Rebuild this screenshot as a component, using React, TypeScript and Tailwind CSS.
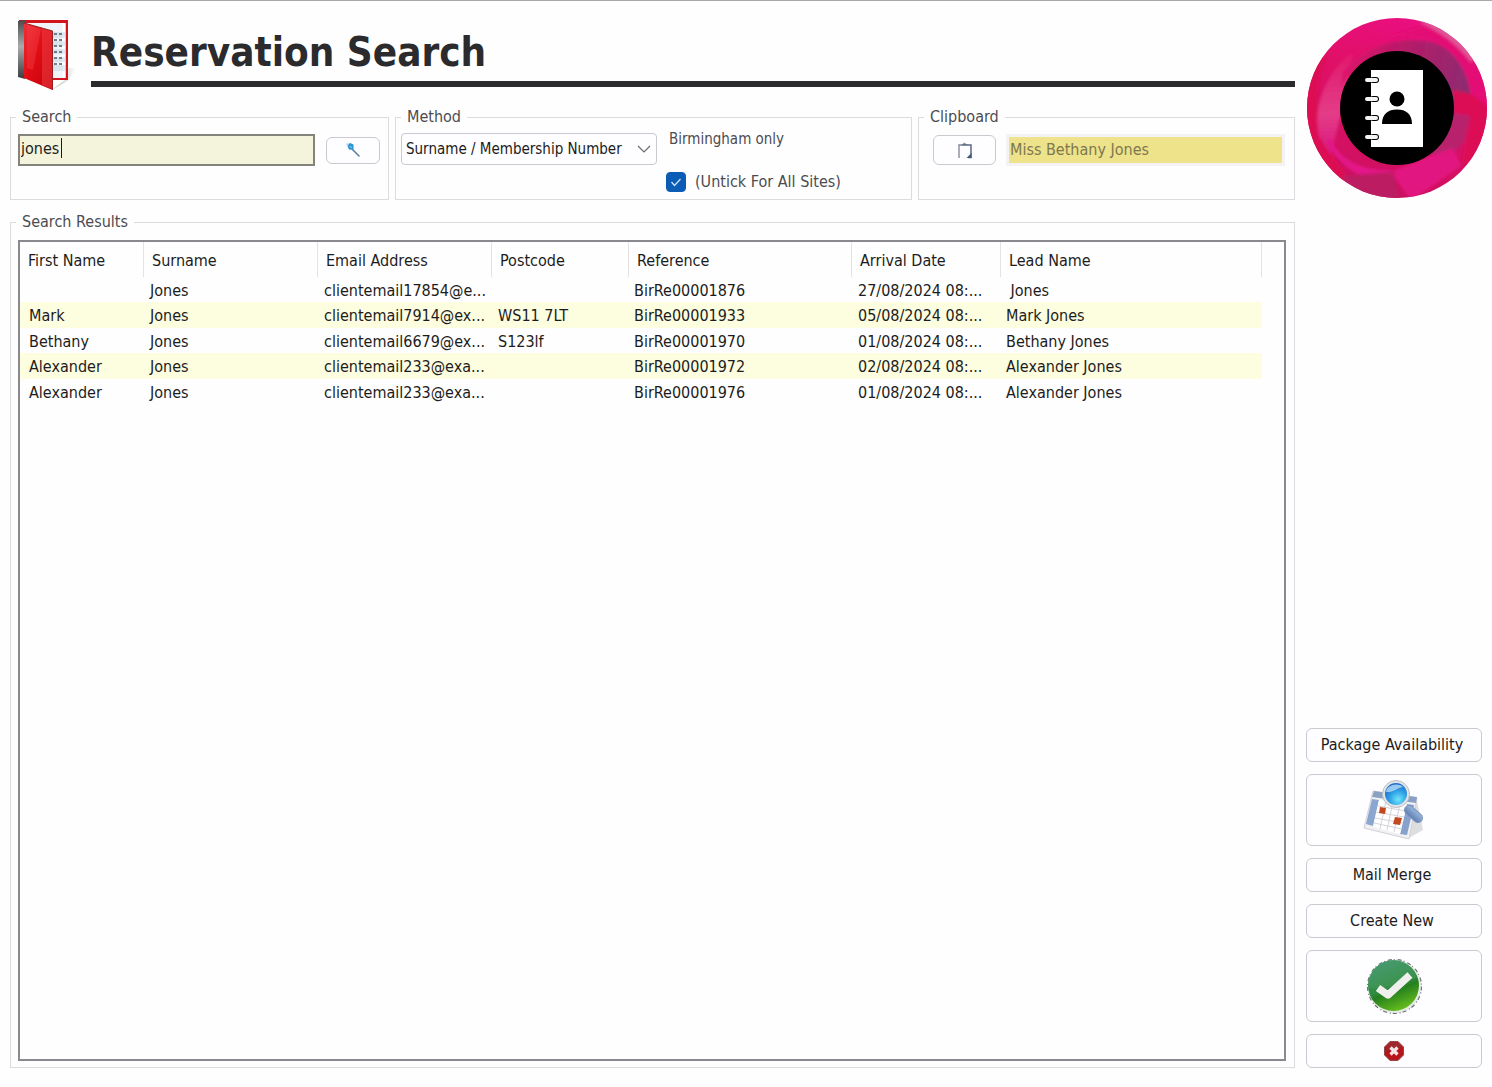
import React, { useState } from 'react'

type Reservation = {
  firstName: string
  surname: string
  email: string
  postcode: string
  reference: string
  arrival: string
  leadName: string
}

const RESERVATIONS: Reservation[] = [
  { firstName: '', surname: 'Jones', email: 'clientemail17854@e...', postcode: '', reference: 'BirRe00001876', arrival: '27/08/2024 08:...', leadName: '\u00a0Jones' },
  { firstName: 'Mark', surname: 'Jones', email: 'clientemail7914@ex...', postcode: 'WS11 7LT', reference: 'BirRe00001933', arrival: '05/08/2024 08:...', leadName: 'Mark Jones' },
  { firstName: 'Bethany', surname: 'Jones', email: 'clientemail6679@ex...', postcode: 'S123lf', reference: 'BirRe00001970', arrival: '01/08/2024 08:...', leadName: 'Bethany Jones' },
  { firstName: 'Alexander', surname: 'Jones', email: 'clientemail233@exa...', postcode: '', reference: 'BirRe00001972', arrival: '02/08/2024 08:...', leadName: 'Alexander Jones' },
  { firstName: 'Alexander', surname: 'Jones', email: 'clientemail233@exa...', postcode: '', reference: 'BirRe00001976', arrival: '01/08/2024 08:...', leadName: 'Alexander Jones' },
]

const COLUMNS = [
  { label: 'First Name', width: 'w-[124px]' },
  { label: 'Surname', width: 'w-[174px]' },
  { label: 'Email Address', width: 'w-[174px]' },
  { label: 'Postcode', width: 'w-[137px]' },
  { label: 'Reference', width: 'w-[223px]' },
  { label: 'Arrival Date', width: 'w-[149px]' },
  { label: 'Lead Name', width: 'w-[261px]' },
]

function BookIcon() {
  return (
    <svg viewBox="0 0 60 74" className="w-[60px] h-[74px] shrink-0" aria-hidden="true">
      <defs>
        <linearGradient id="cover" x1="0" y1="0" x2="1" y2="1">
          <stop offset="0" stopColor="#ee3038" />
          <stop offset="0.45" stopColor="#e00c14" />
          <stop offset="1" stopColor="#c40008" />
        </linearGradient>
        <linearGradient id="spine" x1="0" y1="0" x2="0" y2="1">
          <stop offset="0" stopColor="#4a4a4c" />
          <stop offset="0.45" stopColor="#a9abac" />
          <stop offset="1" stopColor="#3a3a3c" />
        </linearGradient>
        <linearGradient id="bookShadow" x1="0" y1="0" x2="1" y2="0">
          <stop offset="0" stopColor="#8a8a8a" />
          <stop offset="1" stopColor="#ffffff" />
        </linearGradient>
      </defs>
      <path d="M36 72 L50 61 L53 50 L60 50 L53 62 Z" fill="url(#bookShadow)" opacity="0.6" />
      <path d="M3 2 H52 V62 H35 L3 58 Z" fill="#d3141c" />
      <path d="M9 5 H49.500 V60 H36 L9 58 Z" fill="#eef4f7" />
      <path d="M46.500 5 H49.500 V60 H46.500 Z" fill="#ffffff" />
      <path d="M37 14h12v6H37zM37 23h12v5H37zM37 31h12v5H37zM37 39h12v5H37zM37 47h12v6H37z" fill="#bfd3de" opacity="0.45" />
      <path d="M38 16h3M43 16h3M38 22h3M43 22h3M38 28h3M43 28h3M38 34h3M43 34h3M38 40h3M43 40h3M38 46h3M43 46h3" stroke="#4e5a66" strokeWidth="1.400" />
      <path d="M2 3 L9 2 V61 L2 59 Z" fill="url(#spine)" />
      <path d="M8 5 L36.500 13 V72 L8 60 Z" fill="url(#cover)" />
      <path d="M26 10 L36 13 V71 L26 67 Z" fill="#ef4a50" opacity="0.45" />
      <path d="M11 7 L25 11 L17 52 L11 50 Z" fill="#ff5a60" opacity="0.25" />
      <path d="M8 5 L36.500 13 V72" fill="none" stroke="#9c1c20" strokeWidth="1" />
    </svg>
  )
}

function ContactsLogo() {
  return (
    <svg viewBox="0 0 180 180" className="w-[180px] h-[180px]" role="img" aria-label="Contacts">
      <defs>
        <linearGradient id="ring" x1="0.6" y1="0" x2="0.3" y2="1">
          <stop offset="0" stopColor="#ea0f80" />
          <stop offset="0.35" stopColor="#e01066" />
          <stop offset="1" stopColor="#cc1060" />
        </linearGradient>
        <linearGradient id="swirl" x1="0" y1="0.2" x2="1" y2="0.3">
          <stop offset="0" stopColor="#e0106c" />
          <stop offset="0.45" stopColor="#b81a68" />
          <stop offset="1" stopColor="#8e2b70" />
        </linearGradient>
        <linearGradient id="crescent" x1="0" y1="0" x2="0" y2="1">
          <stop offset="0" stopColor="#e0186c" />
          <stop offset="0.6" stopColor="#e43c88" />
          <stop offset="1" stopColor="#d8147c" />
        </linearGradient>
        <clipPath id="disc">
          <circle cx="90" cy="90" r="90" />
        </clipPath>
        <filter id="soft" x="-10%" y="-10%" width="120%" height="120%">
          <feGaussianBlur stdDeviation="1.500" />
        </filter>
      </defs>
      <g clipPath="url(#disc)">
        <rect width="180" height="180" fill="url(#ring)" />
        <g filter="url(#soft)">
          <path d="M-6 50 L20 36 C4 70 6 120 40 156 L30 186 L-6 186 Z" fill="#dc0f52" />
          <path d="M12 118 C6 84 20 54 46 34 L40 72 L28 120 L24 138 Z" fill="url(#crescent)" />
          <path d="M24 120 C30 140 54 154 84 152 L84 162 C52 164 28 144 20 122 Z" fill="#e4148a" />
          <path d="M36 54 C58 28 90 18 124 24 C150 30 166 60 164 92 L146 94 C144 60 120 36 90 34 C66 34 46 46 34 70 Z" fill="url(#swirl)" />
          <path d="M76 20 C110 14 138 24 152 44 C164 62 166 80 164 94 L184 94 L180 56 L150 18 L116 8 Z" fill="#e40f76" />
          <path d="M112 4 C134 14 150 26 164 44 L172 36 L140 0 Z" fill="#de5698" />
          <path d="M146 72 L164 76 L184 90 L184 132 L154 148 L164 98 L147 94 Z" fill="#dc0e54" />
          <path d="M147 95 L163 98 L158 122 L140 144 L124 136 Z" fill="#b8206c" />
          <path d="M124 138 L146 130 L154 148 L104 182 L84 154 Z" fill="#e21280" />
          <path d="M34 158 L86 154 L94 184 L50 178 Z" fill="#bc1a62" />
        </g>
      </g>
      <circle cx="90" cy="90" r="57" fill="#000000" />
      <rect x="64" y="52" width="52" height="77" fill="#ffffff" />
      {[62, 81, 100, 119].map((y) => (
        <g key={y}>
          <rect x="63" y={y - 3} width="9" height="6" rx="3" fill="#000000" />
          <rect x="58" y={y - 2} width="13" height="4" rx="2" fill="#f4f4f4" />
        </g>
      ))}
      <circle cx="90" cy="81" r="7.500" fill="#000000" />
      <path d="M75 106 C75 96 81 91.500 90 91.500 C99 91.500 105 96 105 106 Z" fill="#000000" />
    </svg>
  )
}

function MagnifierIcon() {
  return (
    <svg viewBox="0 0 16 16" className="w-4 h-4" aria-hidden="true">
      <path d="M8 8 L14 14" stroke="#5a7f9e" strokeWidth="1.600" strokeLinecap="round" />
      <path d="M2 3 L5 1 L8.500 2.500 L8.500 8 L4 7.500 Z" fill="#2f94cf" />
      <path d="M1 1.500 L4 1.500 L2.500 5 Z" fill="#b4d6ea" />
      <path d="M4.500 4.500 L7 5.500" stroke="#7fdcf2" strokeWidth="1" />
    </svg>
  )
}

function ClipboardIcon() {
  return (
    <svg viewBox="0 0 16 18" className="w-4 h-[18px]" aria-hidden="true">
      <path d="M2 17 V4 H5" fill="none" stroke="#7c848e" strokeWidth="1.300" />
      <path d="M5 4 L7 1.500 L11 4 Z" fill="#8a8f96" />
      <path d="M5 4 H14 V16.500 H11" fill="none" stroke="#5a6884" strokeWidth="1.500" />
      <path d="M14.500 12 V17 H9.500 Z" fill="#46587c" />
    </svg>
  )
}

function CalendarSearchIcon() {
  return (
    <svg viewBox="0 0 62 62" className="w-[62px] h-[62px]" aria-hidden="true">
      <defs>
        <radialGradient id="lens" cx="0.6" cy="0.75" r="0.8">
          <stop offset="0" stopColor="#6fe6fb" />
          <stop offset="0.5" stopColor="#2e9fe6" />
          <stop offset="1" stopColor="#1b62c0" />
        </radialGradient>
        <linearGradient id="handle" x1="0" y1="1" x2="1" y2="0">
          <stop offset="0" stopColor="#5577ab" />
          <stop offset="1" stopColor="#a4bfe4" />
        </linearGradient>
      </defs>
      <path d="M44 60 L60 51 L54 22 L44 30 Z" fill="#dedee1" />
      <path d="M10 12 L54 19 L46 60 L1 49 Z" fill="#f1f1f3" stroke="#d0d2d7" strokeWidth="1" />
      <path d="M11 12 L54 18 L53 24 L9 18 Z" fill="#8ba1c4" />
      <path d="M9 20 L16 21 L10 47 L3 45 Z" fill="#8ba6d0" />
      <path d="M44 25 L51 26 L44 56 L37 55 Z" fill="#86a1cb" />
      <path d="M16 21 L44 26 L37 55 L10 48 Z" fill="#ffffff" />
      <path d="M15 27 L43 32 M13 33 L41 38 M12 39 L40 44 M11 44 L39 50 M23 22 L17 50 M30 23 L24 51 M37 25 L31 53" stroke="#d2d4da" strokeWidth="1" />
      <path d="M17 28 L23 29 L22 35 L16 34 Z" fill="#c4481f" />
      <path d="M32 38 L39 39 L37 46 L30 45 Z" fill="#c4481f" />
      <path d="M46 31 L55 39" stroke="#7a93bb" strokeWidth="10" strokeLinecap="round" />
      <path d="M46 31 L55 39" stroke="url(#handle)" strokeWidth="8" strokeLinecap="round" />
      <circle cx="33" cy="15" r="13.500" fill="#e2e4e8" stroke="#bcc0c6" strokeWidth="1" />
      <circle cx="33" cy="15" r="11" fill="url(#lens)" />
      <path d="M23 13 C24 6 34 3 40 8 C36 8 30 14 23 13 Z" fill="#bfe2fa" opacity="0.75" />
    </svg>
  )
}

function ConfirmIcon() {
  return (
    <svg viewBox="0 0 58 58" className="w-[58px] h-[58px]" aria-hidden="true">
      <defs>
        <linearGradient id="green" x1="0.3" y1="0" x2="0.7" y2="1">
          <stop offset="0" stopColor="#3c9468" />
          <stop offset="0.5" stopColor="#2f8c42" />
          <stop offset="0.6" stopColor="#257f1e" />
          <stop offset="1" stopColor="#6cc41c" />
        </linearGradient>
      </defs>
      <circle cx="29.500" cy="29.500" r="27" fill="#e8eae8" stroke="#6c746e" strokeWidth="1.200" strokeDasharray="4 2 1 3" />
      <circle cx="28.500" cy="28.500" r="25.500" fill="url(#green)" />
      <path d="M4 31 C20 34 36 24 52 21 A25 25 0 0 0 4 21 Z" fill="#ffffff" opacity="0.06" />
      <path d="M13 31 L23 38 L45 18" fill="none" stroke="#efefed" strokeWidth="7.500" strokeLinejoin="round" />
    </svg>
  )
}

function CloseIcon() {
  return (
    <svg viewBox="0 0 20 20" className="w-5 h-5" aria-hidden="true">
      <path d="M6 0.500 H14 L19.500 6 V14 L14 19.500 H6 L0.500 14 V6 Z" fill="#b8141c" stroke="#8e4a4e" strokeWidth="1" />
      <path d="M3 4 L6 1.500 H14 L18 6 C12 8 7 8 2 11 Z" fill="#5c5c5c" opacity="0.3" />
      <path d="M6.500 6.500 L13.500 13.500 M13.500 6.500 L6.500 13.500" stroke="#f2e6e6" strokeWidth="3.200" />
    </svg>
  )
}

function Group({ title, className = '', children }: { title: string; className?: string; children: React.ReactNode }) {
  return (
    <fieldset className={`min-w-0 border border-[#dcdbdf] ${className}`}>
      <legend className="ml-[5px] px-[6px] leading-[22px] text-[#4c4c50]">{title}</legend>
      {children}
    </fieldset>
  )
}

function SideButton({ className = 'h-[34px] pr-1', label, children }: { className?: string; label?: string; children: React.ReactNode }) {
  return (
    <button
      type="button"
      aria-label={label}
      className={`flex w-full items-center justify-center rounded-md border border-[#cbc9d0] bg-[#fefdff] text-[#1c1c20] ${className}`}
    >
      {children}
    </button>
  )
}

export default function App() {
  const [query, setQuery] = useState('jones')
  const [localOnly, setLocalOnly] = useState(true)

  return (
    <div className="flex min-h-screen gap-3 border-t border-[#a8a8aa] bg-[#fefefe] pt-[17px] pr-[5px] pb-[19px] pl-[10px] font-['DejaVu_Sans_Condensed','DejaVu_Sans',sans-serif] text-base leading-[22px] text-[#1c1c20]">
      <main className="flex min-w-0 flex-1 flex-col">
        <header className="flex h-[74px] gap-3 pl-[6px]">
          <BookIcon />
          <div className="flex-1 pl-[3px]">
            <h1 className="h-[63px] pt-[10px] text-[40px] leading-[48px] font-bold text-[#2b2b2e]">Reservation Search</h1>
            <div className="h-[6px] bg-[#2b2b2e]" />
          </div>
        </header>

        <div className="mt-[14px] grid grid-cols-[379fr_517fr_377fr] gap-[6px]">
          <Group title="Search" className="h-[94px]">
            <div className="flex items-center gap-[11px] pt-[6px] pr-[8px] pl-[7px]">
              <div className="relative min-w-0 flex-1">
                <input
                  type="text"
                  aria-label="Search"
                  value={query}
                  onChange={(e) => setQuery(e.target.value)}
                  className="peer block h-8 w-full border-2 border-[#84847c] bg-[#f4f4dc] pb-1 pl-px outline-none"
                />
                <span className="pointer-events-none absolute top-1 left-[43px] h-5 w-px bg-[#1c1c20] peer-focus:hidden" />
              </div>
              <button type="button" aria-label="Run search" className="flex h-[27px] w-[54px] items-center justify-center rounded-md border border-[#cbc9d0] bg-[#fefdff]">
                <MagnifierIcon />
              </button>
            </div>
          </Group>

          <Group title="Method" className="h-[94px]">
            <div className="flex gap-[9px] pl-[5px]">
              <div className="relative mt-[5px] h-8 w-[256px]">
                <select aria-label="Method" className="h-full w-full appearance-none rounded-sm border border-[#cbc9d0] bg-[#fefdff] pl-[4px] text-[15px] outline-none">
                  <option>Surname / Membership Number</option>
                </select>
                <svg viewBox="0 0 14 8" className="pointer-events-none absolute top-3 right-[6px] h-2 w-[14px]" aria-hidden="true">
                  <path d="M1 1 L7 7 L13 1" fill="none" stroke="#6c6c70" strokeWidth="1.200" />
                </svg>
              </div>
              <div className="flex flex-col gap-[21px] text-[#4c4c50]">
                <span className="pl-[3px] text-[15px]">Birmingham only</span>
                <label className="flex items-center gap-[9px]">
                  <span className="relative h-5 w-5">
                    <input
                      type="checkbox"
                      checked={localOnly}
                      onChange={(e) => setLocalOnly(e.target.checked)}
                      className="block h-5 w-5 appearance-none rounded border border-[#8a8a8e] bg-white checked:border-[#0a5cb4] checked:bg-[#0a5cb4]"
                    />
                    {localOnly && (
                      <svg viewBox="0 0 20 20" className="pointer-events-none absolute inset-0 h-5 w-5" aria-hidden="true">
                        <path d="M5.500 10 L8.500 13.500 L14.500 7" fill="none" stroke="#cfe2f6" strokeWidth="1.300" />
                      </svg>
                    )}
                  </span>
                  (Untick For All Sites)
                </label>
              </div>
            </div>
          </Group>

          <Group title="Clipboard" className="h-[94px]">
            <div className="flex items-center gap-[10px] pt-[6px] pr-[9px] pl-[14px]">
              <button type="button" aria-label="Paste from clipboard" className="flex h-[30px] w-[63px] items-center justify-center rounded-md border border-[#cbc9d0] bg-[#fefdff]">
                <ClipboardIcon />
              </button>
              <input
                type="text"
                aria-label="Clipboard"
                readOnly
                value="Miss Bethany Jones"
                className="h-8 min-w-0 flex-1 border-[3px] border-[#f4f2f5] bg-[#eee28a] pb-[2px] pl-px text-[#7c7850] outline-none"
              />
            </div>
          </Group>
        </div>

        <Group title="Search Results" className="mt-[11px] flex-1">
          <div className="flex h-full flex-col pt-[7px] pr-[8px] pb-[6px] pl-[7px]">
            <div className="flex-1 overflow-hidden border-2 border-[#8a8a8e]">
              <table className="w-full table-fixed border-separate border-spacing-0 text-left whitespace-nowrap">
                <thead>
                  <tr className="h-[35px]">
                    {COLUMNS.map((col) => (
                      <th key={col.label} scope="col" className={`border-r border-[#e4e2e6] pt-[2px] pl-2 font-normal ${col.width}`}>
                        {col.label}
                      </th>
                    ))}
                    <td />
                  </tr>
                </thead>
                <tbody>
                  {RESERVATIONS.map((row, i) => {
                    const cell = `overflow-hidden pt-[2px] ${i % 2 ? 'bg-[#fdfde0]' : ''}`
                    return (
                      <tr key={row.reference} className="odd:h-[25px] even:h-[26px]">
                        <td className={`pl-[9px] ${cell}`}>{row.firstName}</td>
                        <td className={`pl-[6px] ${cell}`}>{row.surname}</td>
                        <td className={`pl-[6px] ${cell}`}>{row.email}</td>
                        <td className={`pl-[6px] ${cell}`}>{row.postcode}</td>
                        <td className={`pl-[5px] ${cell}`}>{row.reference}</td>
                        <td className={`pl-[6px] ${cell}`}>{row.arrival}</td>
                        <td className={`pl-[5px] ${cell}`}>{row.leadName}</td>
                        <td />
                      </tr>
                    )
                  })}
                </tbody>
              </table>
            </div>
          </div>
        </Group>
      </main>

      <aside className="flex w-[180px] shrink-0 flex-col justify-between">
        <ContactsLogo />
        <div className="-ml-px flex w-[176px] flex-col gap-3">
          <SideButton>Package Availability</SideButton>
          <SideButton className="h-[72px]" label="Search availability calendar">
            <CalendarSearchIcon />
          </SideButton>
          <SideButton>Mail Merge</SideButton>
          <SideButton>Create New</SideButton>
          <SideButton className="h-[72px]" label="Confirm">
            <ConfirmIcon />
          </SideButton>
          <SideButton className="h-[34px]" label="Close">
            <CloseIcon />
          </SideButton>
        </div>
      </aside>
    </div>
  )
}
